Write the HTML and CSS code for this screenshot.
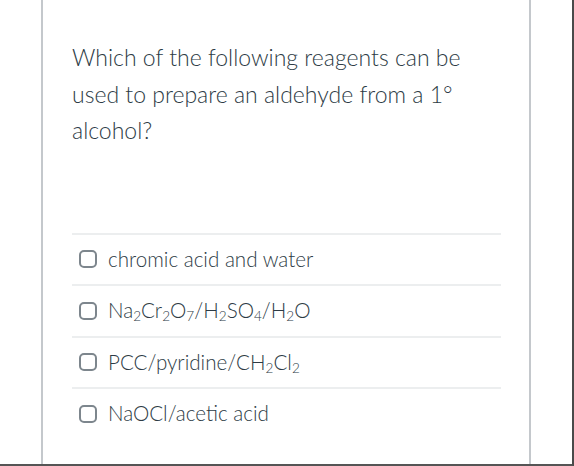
FILE: index.html
```html
<!DOCTYPE html>
<html>
<head>
<meta charset="utf-8">
<link rel="stylesheet" href="styles.css">
</head>
<body>
<div class="frame">
  <div class="card">
    <p class="question">Which of the following reagents can be used to prepare an aldehyde from a 1° alcohol?</p>
    <ul class="answers">
      <li class="answer"><span class="box"></span><span class="label">chromic acid and water</span></li>
      <li class="answer"><span class="box"></span><span class="label">Na<sub>2</sub>Cr<sub>2</sub>O<sub>7</sub>/H<sub>2</sub>SO<sub>4</sub>/H<sub>2</sub>O</span></li>
      <li class="answer"><span class="box"></span><span class="label">PCC/pyridine/CH<sub>2</sub>Cl<sub>2</sub></span></li>
      <li class="answer"><span class="box"></span><span class="label">NaOCl/acetic acid</span></li>
    </ul>
  </div>
</div>
</body>
</html>
```
FILE: styles.css
```css
html, body {
  margin: 0;
  padding: 0;
  background: #ffffff;
}
.frame {
  box-sizing: border-box;
  width: 574px;
  height: 466px;
  border-right: 2px solid #4a4a4a;
  border-bottom: 2px solid #555555;
  overflow: hidden;
  font-family: Lato, "Open Sans", sans-serif;
  font-weight: 300;
  color: #2d3b45;
}
.card {
  box-sizing: border-box;
  margin-left: 41px;
  width: 490px;
  height: 100%;
  border-left: 2px solid #c4c8cc;
  border-right: 2px solid #c4c8cc;
  padding: 39px 28px 0 29px;
}
.question {
  margin: 0;
  font-size: 23px;
  line-height: 36.5px;
  width: 410px;
}
.answers {
  list-style: none;
  margin: 84px 0 0 0;
  padding: 0;
}
.answer {
  display: flex;
  align-items: center;
  height: 49.5px;
  border-top: 2px solid #eceeef;
  padding-left: 7px;
  font-size: 20.6px;
}
.box {
  box-sizing: border-box;
  width: 18px;
  height: 18px;
  border: 2px solid #7d868d;
  border-radius: 5px;
  margin-right: 11px;
  flex: none;
}
.label {
  line-height: 1;
}
sub {
  font-size: 0.66em;
  vertical-align: -0.22em;
  line-height: 0;
}
```
